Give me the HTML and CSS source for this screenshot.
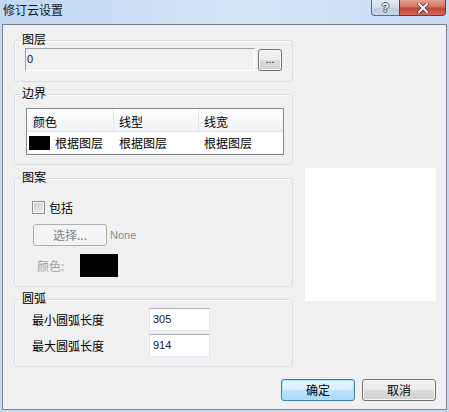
FILE: index.html
```html
<!DOCTYPE html>
<html lang="zh-CN">
<head>
<meta charset="utf-8">
<title>修订云设置</title>
<link rel="stylesheet" href="styles.css">
</head>
<body>
<div class="window">
  <div class="titlebar">
    <span class="title">修订云设置</span>
    <div class="caption-btns">
      <div class="cbtn help"><span class="qmark">?</span></div>
      <div class="cbtn close">
        <svg width="12" height="10" viewBox="0 0 12 10">
          <path d="M2 1 L10 9 M10 1 L2 9" stroke="#3a3a3a" stroke-width="3.6" stroke-linecap="square" fill="none"/>
          <path d="M2 1 L10 9 M10 1 L2 9" stroke="#ffffff" stroke-width="2" stroke-linecap="square" fill="none"/>
        </svg>
      </div>
    </div>
  </div>
  <div class="frame">
    <div class="main">
      <div class="leftcol">
        <div class="group g-layer">
          <span class="legend">图层</span>
          <div class="layer-row">
            <div class="field latin">0</div>
            <div class="btn small latin">...</div>
          </div>
        </div>
        <div class="group g-border">
          <span class="legend">边界</span>
          <div class="table">
            <div class="thead">
              <div class="th c1">颜色</div>
              <div class="th c2">线型</div>
              <div class="th c3">线宽</div>
            </div>
            <div class="trow">
              <div class="td c1"><span class="swatch-sm"></span>根据图层</div>
              <div class="td c2">根据图层</div>
              <div class="td c3">根据图层</div>
            </div>
          </div>
        </div>
        <div class="group g-pattern">
          <span class="legend">图案</span>
          <div class="check-row"><span class="checkbox"></span><span class="check-label">包括</span></div>
          <div class="select-row"><div class="btn disabled">选择...</div><span class="none latin">None</span></div>
          <div class="color-row"><span class="color-label">颜色:</span><span class="swatch-lg"></span></div>
        </div>
        <div class="group g-arc">
          <span class="legend">圆弧</span>
          <div class="arc-grid">
            <span class="arc-label">最小圆弧长度</span><div class="input latin">305</div>
            <span class="arc-label">最大圆弧长度</span><div class="input latin">914</div>
          </div>
        </div>
      </div>
      <div class="preview"></div>
    </div>
    <div class="footer">
      <div class="btn default">确定</div>
      <div class="btn">取消</div>
    </div>
  </div>
</div>
</body>
</html>
```
FILE: styles.css
```css
html, body {
  margin: 0;
  padding: 0;
}
body {
  width: 449px;
  height: 412px;
  overflow: hidden;
  background: #c3d9f1;
  font-family: "Noto Sans CJK SC", "Liberation Sans", sans-serif;
  font-size: 12px;
  color: #000;
}
.window {
  width: 449px;
  height: 412px;
}
.titlebar {
  height: 24px;
  display: flex;
  justify-content: space-between;
  align-items: flex-start;
  background: linear-gradient(90deg, #c0d8f1 0%, #d4e6f8 55%, #c6dcf3 100%);
}
.title {
  margin: 3px 0 0 3px;
  line-height: 14px;
  color: #0b1a2c;
}
.caption-btns {
  display: flex;
  margin-right: 3px;
}
.cbtn {
  height: 16px;
  box-sizing: border-box;
  display: flex;
  align-items: center;
  justify-content: center;
  border: 1px solid #5d6d80;
  border-top: none;
}
.help {
  width: 28px;
  border-right: none;
  border-radius: 0 0 0 4px;
  background: linear-gradient(180deg, #e2eaf3 0%, #cfdbe9 50%, #bccbdf 51%, #c9d7e8 100%);
}
.qmark {
  font-family: "Liberation Sans", sans-serif;
  font-weight: bold;
  font-size: 12px;
  line-height: 12px;
  color: #fff;
  text-shadow: -1px 0 #4b5563, 1px 0 #4b5563, 0 -1px #4b5563, 0 1px #4b5563;
}
.close {
  width: 47px;
  border-radius: 0 0 4px 0;
  background: linear-gradient(180deg, #e3a293 0%, #d57462 45%, #c44433 55%, #d26a55 100%);
  border-color: #6b3a36;
}
.frame {
  margin: 0 2px;
  width: 445px;
  height: 386px;
  box-sizing: border-box;
  border: 1px solid #7a8391;
  background: #f0f0f0;
}
.main {
  display: flex;
  padding: 15px 0 0 11px;
}
.leftcol {
  width: 279px;
  display: flex;
  flex-direction: column;
}
.group {
  position: relative;
  box-sizing: border-box;
  border: 1px solid #d5dfe5;
  border-radius: 3px;
  box-shadow: inset 1px 1px 0 #fafcfd;
}
.legend {
  position: absolute;
  top: -9px;
  left: 6px;
  padding: 0 1px;
  line-height: 14px;
  background: #f0f0f0;
}
.latin {
  font-family: "Liberation Sans", sans-serif;
  font-size: 11px;
}
/* layer group */
.g-layer {
  height: 42px;
  padding: 7px 0 0 10px;
}
.layer-row {
  display: flex;
  align-items: flex-start;
  gap: 3px;
}
.field {
  width: 230px;
  height: 23px;
  box-sizing: border-box;
  border-top: 1px solid #a0a0a0;
  border-left: 1px solid #a0a0a0;
  border-right: 1px solid #ffffff;
  border-bottom: 1px solid #ffffff;
  padding-left: 1px;
  line-height: 20px;
  color: #1a0a30;
}
.btn {
  box-sizing: border-box;
  width: 74px;
  height: 22px;
  border: 1px solid #707070;
  border-radius: 3px;
  background: linear-gradient(180deg, #f2f2f2 0%, #ebebeb 48%, #dddddd 52%, #cfcfcf 100%);
  box-shadow: inset 0 0 0 1px #fbfbfb;
  display: flex;
  align-items: center;
  justify-content: center;
  line-height: 14px;
}
.btn.small {
  width: 24px;
  margin-top: 1px;
  color: #111;
  font-size: 11px;
  padding-bottom: 2px;
}
/* border group */
.g-border {
  height: 71px;
  margin-top: 12px;
  padding: 13px 0 0 11px;
}
.table {
  width: 258px;
  height: 47px;
  box-sizing: border-box;
  border: 1px solid #828790;
  background: #fff;
}
.thead, .trow {
  display: grid;
  grid-template-columns: 87px 85px 84px;
}
.thead {
  height: 23px;
  box-sizing: border-box;
  border-bottom: 1px solid #e2e3e6;
}
.th {
  box-sizing: border-box;
  background: linear-gradient(180deg, #ffffff 0%, #f7f8f9 50%, #f1f2f4 100%);
  border-right: 1px solid #e3e5e8;
  padding: 6px 0 0 5px;
  line-height: 14px;
}
.th.c1 { padding-left: 6px; }
.th.c3 { border-right: none; }
.trow {
  height: 22px;
  box-sizing: border-box;
  border-bottom: 1px solid #f0f0f0;
}
.td {
  display: flex;
  align-items: center;
  padding-left: 5px;
  line-height: 14px;
}
.td.c1 { padding-left: 2px; }
.swatch-sm {
  width: 21px;
  height: 14px;
  background: #000;
  margin-right: 5px;
}
/* pattern group */
.g-pattern {
  height: 109px;
  margin-top: 13px;
  padding: 22px 0 0 17px;
}
.check-row {
  display: flex;
  align-items: center;
  height: 13px;
}
.checkbox {
  width: 13px;
  height: 13px;
  box-sizing: border-box;
  border: 1px solid #8f8f8f;
  background: linear-gradient(135deg, #c7cbd1 0%, #eef0f2 100%);
  box-shadow: inset 0 0 0 1px #f4f4f4;
}
.check-label {
  margin-left: 4px;
  line-height: 14px;
}
.select-row {
  display: flex;
  align-items: center;
  margin: 10px 0 0 1px;
}
.btn.disabled {
  border-color: #adb2b5;
  background: #f4f4f4;
  box-shadow: none;
  color: #838383;
}
.none {
  margin-left: 3px;
  color: #8d8d8d;
}
.color-row {
  display: flex;
  align-items: center;
  margin: 8px 0 0 5px;
}
.color-label {
  width: 43px;
  color: #a0a0a0;
  line-height: 14px;
}
.swatch-lg {
  width: 38px;
  height: 23px;
  background: #000;
}
/* arc group */
.g-arc {
  height: 68px;
  margin-top: 12px;
  padding: 8px 0 0 17px;
}
.arc-grid {
  display: grid;
  grid-template-columns: 117px 61px;
  grid-auto-rows: 23px;
  row-gap: 3px;
  align-items: center;
}
.arc-label {
  line-height: 14px;
}
.input {
  height: 23px;
  box-sizing: border-box;
  border: 1px solid #e2e3ea;
  border-top-color: #abadb3;
  border-bottom-color: #e3e9ef;
  background: #fff;
  padding-left: 3px;
  line-height: 20px;
  color: #101830;
}
.preview {
  width: 131px;
  height: 133px;
  margin: 128px 0 0 12px;
  background: #fff;
}
.footer {
  display: flex;
  justify-content: flex-end;
  gap: 7px;
  margin-top: 12px;
  padding-right: 10px;
}
.btn.default {
  border-color: #3c7fb1;
  background: linear-gradient(180deg, #eaf6fd 0%, #d9f0fc 48%, #bee6fd 52%, #a7d9f5 100%);
  box-shadow: inset 0 0 0 1px #a6e2f8;
}
```
